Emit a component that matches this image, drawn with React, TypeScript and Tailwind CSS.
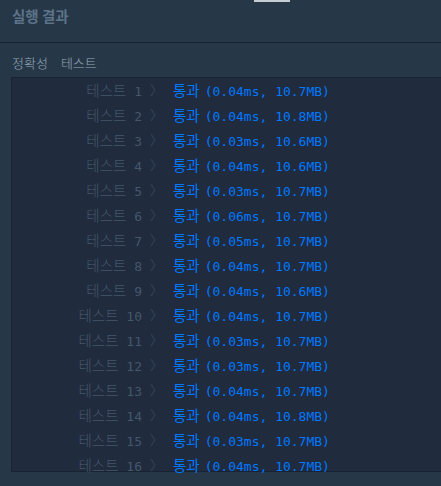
const rows = [
  ['1', '0.04ms, 10.7MB'],
  ['2', '0.04ms, 10.8MB'],
  ['3', '0.03ms, 10.6MB'],
  ['4', '0.04ms, 10.6MB'],
  ['5', '0.03ms, 10.7MB'],
  ['6', '0.06ms, 10.7MB'],
  ['7', '0.05ms, 10.7MB'],
  ['8', '0.04ms, 10.7MB'],
  ['9', '0.04ms, 10.6MB'],
  ['10', '0.04ms, 10.7MB'],
  ['11', '0.03ms, 10.7MB'],
  ['12', '0.03ms, 10.7MB'],
  ['13', '0.04ms, 10.7MB'],
  ['14', '0.04ms, 10.8MB'],
  ['15', '0.03ms, 10.7MB'],
  ['16', '0.04ms, 10.7MB'],
];

const App = () => {
  return (
    <div className="h-[486px] w-[441px] overflow-hidden bg-[#263747] font-['Noto_Sans_CJK_KR','Noto_Sans',sans-serif]">
      {/* 위쪽 탭 표시줄 */}
      <div className="ml-[254px] h-[2px] w-[36px] bg-[#c4ccd4]" />
      <div className="h-[41px] border-b border-[#172233] px-3 pt-[3px]">
        <h2 className="text-[14.5px] font-bold leading-[22px] text-[#5d7389]">실행 결과</h2>
      </div>
      <div className="pl-3 pt-[10px] text-[13px] font-light leading-[20px] text-[#98a8b9]">
        <span>정확성</span>
        <span className="ml-[13px]">테스트</span>
      </div>
      <div className="ml-[11px] mt-[4px] h-[395px] w-[440px] border border-r-0 border-[#172233] bg-[#202b3d] font-['DejaVu_Sans_Mono','Noto_Sans_CJK_KR',monospace] text-[13px]">
        {rows.map(([n, info]) => (
          <div key={n} className="flex h-[25px] items-center whitespace-pre">
            <span className="w-[130px] text-right text-[#44576c]">
              <span className="font-['Noto_Sans_CJK_KR',sans-serif] text-[14.5px] font-light">테스트</span> {n}
            </span>
            <span className="ml-[8px] w-[23px] text-[#34455a]">〉</span>
            <span className="text-[#0078ff]">
              <span className="font-['Noto_Sans_CJK_KR',sans-serif] text-[14.5px]">통과</span>
              <span className="ml-[5px]">({info})</span>
            </span>
          </div>
        ))}
      </div>
    </div>
  );
};

export default App;
